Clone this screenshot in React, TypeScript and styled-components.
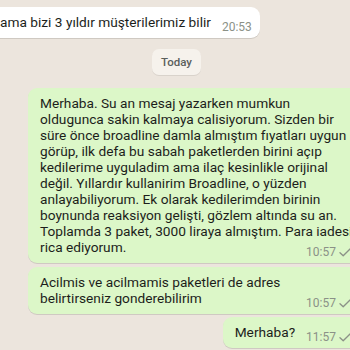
import React from 'react';
import styled, { createGlobalStyle } from 'styled-components';

const GlobalStyle = createGlobalStyle`
  html, body {
    margin: 0;
    padding: 0;
    overflow: hidden;
    background: #ece5dd;
  }
`;

const Chat = styled.div`
  width: 350px;
  height: 350px;
  overflow: hidden;
  display: flex;
  flex-direction: column;
  padding-top: 7px;
  box-sizing: border-box;
  background: #ece5dd;
  font-family: Roboto, 'Noto Sans', sans-serif;
`;

const Row = styled.div<{ $out?: boolean; $mt?: number }>`
  display: flex;
  justify-content: ${(p) => (p.$out ? 'flex-end' : 'flex-start')};
  margin-top: ${(p) => p.$mt ?? 0}px;
  margin-left: ${(p) => (p.$out ? 0 : -8)}px;
  margin-right: ${(p) => (p.$out ? -9 : 0)}px;
`;

const Bubble = styled.div<{ $out?: boolean; $width?: number }>`
  display: flex;
  flex-direction: column;
  width: ${(p) => (p.$width ? `${p.$width}px` : 'auto')};
  box-sizing: border-box;
  padding: 7px 8px 8px ${(p) => (p.$out ? 12 : 8)}px;
  background: ${(p) => (p.$out ? '#dcf7c8' : '#ffffff')};
  border-radius: 9px;
  box-shadow: 0 1px 0.5px rgba(0, 0, 0, 0.12);
  font-size: 13.7px;
  line-height: 16px;
  color: #1c1e1b;
`;

const Lines = styled.div`
  white-space: pre;
`;

const LastLine = styled.div`
  display: flex;
  align-items: flex-end;
  gap: 11px;
  white-space: pre;
`;

const Meta = styled.div`
  margin-left: auto;
  margin-bottom: -4px;
  display: flex;
  align-items: center;
  gap: 3px;
  font-size: 12px;
  line-height: 13px;
  color: #8b9187;
`;

const DayPill = styled.div`
  align-self: center;
  margin: 11px 0 13px 3px;
  padding: 6px 9px;
  font-size: 11.5px;
  line-height: 14px;
  font-weight: 500;
  color: #5b5f5c;
  background: #f6f2ec;
  border-radius: 7px;
  box-shadow: 0 1px 0.5px rgba(0, 0, 0, 0.08);
`;

const Check = () => (
  <svg width="12" height="9" viewBox="0 0 12 9" fill="none">
    <path d="M1 4.8 L4.2 7.8 L11 1" stroke="#8b9187" strokeWidth="1.3" strokeLinecap="round" strokeLinejoin="round" />
  </svg>
);

type Msg = {
  out?: boolean;
  text: string;
  time: string;
  width?: number;
  mt?: number;
};

const messages: Msg[] = [
  {
    out: true,
    width: 331,
    time: '10:57',
    text: [
      'Merhaba. Su an mesaj yazarken mumkun',
      'oldugunca sakin kalmaya calisiyorum. Sizden bir',
      'süre önce broadline damla almıştım fıyatları uygun',
      'görüp, ilk defa bu sabah paketlerden birini açıp',
      'kedilerime uyguladim ama ilaç kesinlikle orijinal',
      'değil. Yıllardır kullanirim Broadline, o yüzden',
      'anlayabiliyorum. Ek olarak kedilerimden birinin',
      'boynunda reaksiyon gelişti, gözlem altında su an.',
      'Toplamda 3 paket, 3000 liraya almıştım. Para iadesi',
      'rica ediyorum.',
    ].join('\n'),
  },
  {
    out: true,
    width: 331,
    mt: 4,
    time: '10:57',
    text: 'Acilmis ve acilmamis paketleri de adres\nbelirtirseniz gonderebilirim',
  },
  { out: true, mt: 3, time: '11:57', text: 'Merhaba?' },
];

function Message({ m }: { m: Msg }) {
  const lines = m.text.split('\n');
  const last = lines.pop();
  return (
    <Row $out={m.out} $mt={m.mt}>
      <Bubble $out={m.out} $width={m.width}>
        {lines.length > 0 && <Lines>{lines.join('\n')}</Lines>}
        <LastLine>
          <span>{last}</span>
          <Meta>
            <span>{m.time}</span>
            {m.out && <Check />}
          </Meta>
        </LastLine>
      </Bubble>
    </Row>
  );
}

export default function App() {
  return (
    <>
      <GlobalStyle />
      <Chat>
        <Message m={{ text: 'ama bizi 3 yıldır müşterilerimiz bilir', time: '20:53' }} />
        <DayPill>Today</DayPill>
        {messages.map((m, i) => (
          <Message key={i} m={m} />
        ))}
      </Chat>
    </>
  );
}
